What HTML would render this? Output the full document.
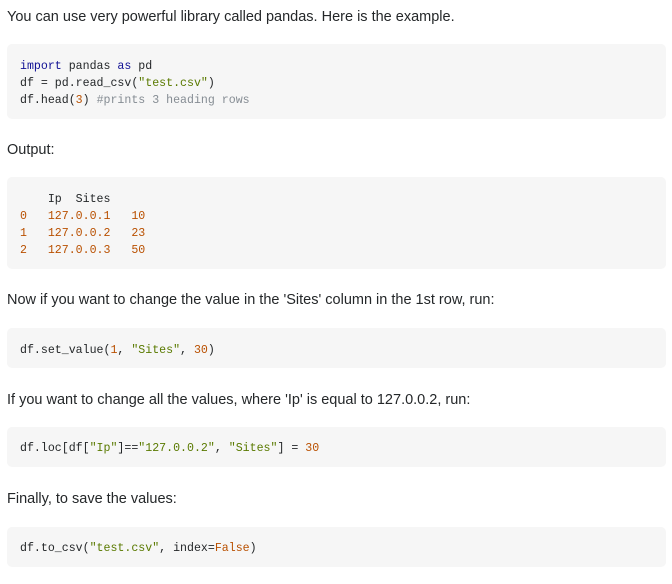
<!DOCTYPE html>
<html><head><style>
body{margin:0;background:#fff;width:672px;height:584px;position:relative;overflow:hidden;font-family:"Liberation Sans",Arial,sans-serif;font-size:14.5px;color:#242729}
p{position:absolute;left:7px;margin:0;line-height:18px}
.c{position:absolute;left:7px;width:659px;background:#f6f6f6;border-radius:5px}
pre{position:absolute;left:13px;margin:0;font-family:"Liberation Mono",monospace;font-size:11.6px;line-height:17px;color:#242729}
.k{color:#101094}.s{color:#5a7a00}.n{color:#b95000}.m{color:#858c93}
</style></head><body>
<p style="top:8px">You can use very powerful library called pandas. Here is the example.</p>
<div class="c" style="top:44px;height:75px"><pre style="top:14px"><span class="k">import</span> pandas <span class="k">as</span> pd
df = pd.read_csv(<span class="s">"test.csv"</span>)
df.head(<span class="n">3</span>) <span class="m">#prints 3 heading rows</span></pre></div>
<p style="top:141px">Output:</p>
<div class="c" style="top:177px;height:92px"><pre style="top:14px">    Ip  Sites
<span class="n">0</span>   <span class="n">127.0.0.1</span>   <span class="n">10</span>
<span class="n">1</span>   <span class="n">127.0.0.2</span>   <span class="n">23</span>
<span class="n">2</span>   <span class="n">127.0.0.3</span>   <span class="n">50</span></pre></div>
<p style="top:291px">Now if you want to change the value in the 'Sites' column in the 1st row, run:</p>
<div class="c" style="top:328px;height:40px"><pre style="top:14px">df.set_value(<span class="n">1</span>, <span class="s">"Sites"</span>, <span class="n">30</span>)</pre></div>
<p style="top:391px">If you want to change all the values, where 'Ip' is equal to 127.0.0.2, run:</p>
<div class="c" style="top:427px;height:40px"><pre style="top:13px">df.loc[df[<span class="s">"Ip"</span>]==<span class="s">"127.0.0.2"</span>, <span class="s">"Sites"</span>] = <span class="n">30</span></pre></div>
<p style="top:490px">Finally, to save the values:</p>
<div class="c" style="top:527px;height:40px"><pre style="top:13px">df.to_csv(<span class="s">"test.csv"</span>, index=<span class="n">False</span>)</pre></div>
</body></html>
